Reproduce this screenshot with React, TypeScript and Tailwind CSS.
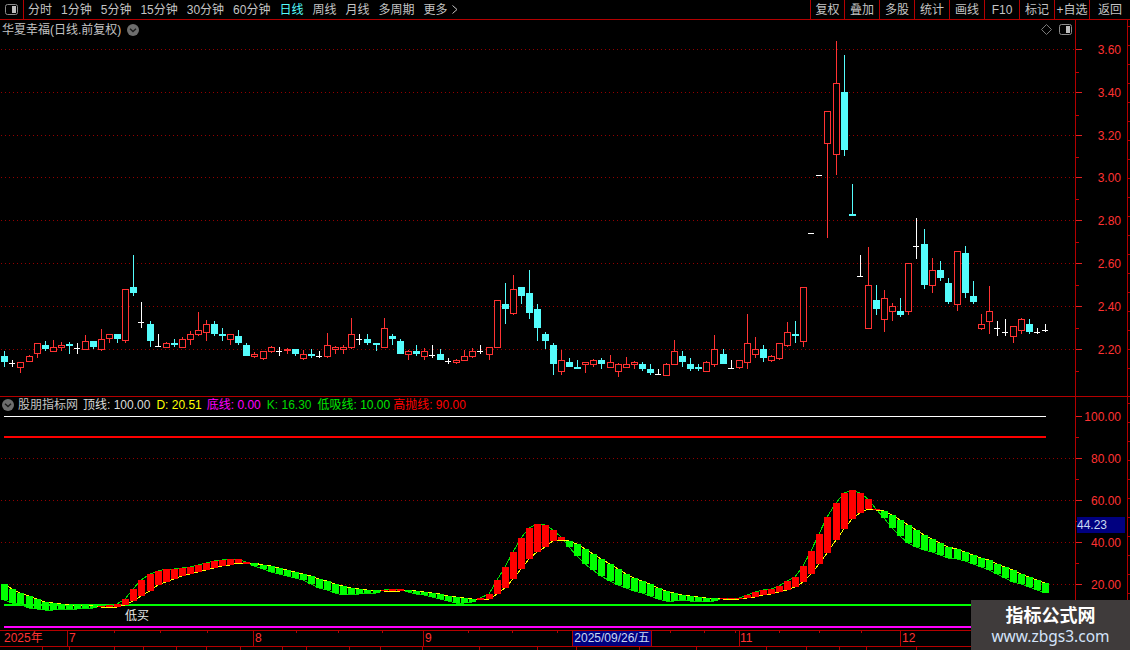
import type { ReactNode } from "react";

const RED = "#ff3232";
const CYAN = "#54fcfc";
const WHITE = "#ffffff";
const DOT = "#940000";

const STEP = 8.07;
const X0 = 4.3;
const xOf = (i: number) => Math.round(X0 + STEP * i);

// kind, bodyTop, bodyBottom, wickTop, wickBottom
type C = ["r" | "c" | "w", number, number, number, number];
const candles: C[] = [
  ["c",356,362,351,367],["w",363,363,360,367],["r",362,368,362,373],["r",356,362,355,362],["r",343,354,343,358],
  ["c",345,349,341,351],["r",347,352,340,352],["r",345,348,342,351],["c",344,346,342,354],["w",348,348,343,354],
  ["r",341,350,335,350],["c",341,347,341,349],["r",339,350,329,351],["r",334,339,334,343],["c",334,339,334,343],
  ["r",289,341,289,343],["c",287,293,255,296],["w",322,322,302,328],["c",324,341,321,347],["w",346,346,334,347],
  ["r",343,348,342,348],["c",343,345,339,347],["r",339,348,337,348],["r",334,340,331,345],["r",330,335,312,336],
  ["r",324,333,320,341],["c",324,334,321,336],["c",334,336,328,341],["r",334,340,334,345],["c",336,343,330,345],
  ["c",345,356,343,356],["r",354,357,352,358],["r",351,359,351,360],["r",347,352,346,353],["w",351,351,347,356],
  ["r",349,351,348,354],["c",349,354,349,356],["r",354,359,350,360],["c",354,356,349,358],["w",356,356,351,358],
  ["r",345,357,333,358],["r",347,350,346,354],["r",347,350,345,354],["r",334,348,318,349],["w",339,339,334,345],
  ["c",339,343,334,345],["c",343,345,343,351],["r",328,348,318,348],["c",336,339,334,345],["c",341,354,339,354],
  ["r",351,355,350,360],["c",351,354,345,356],["r",351,357,348,360],["w",355,355,345,358],["c",354,360,349,360],
  ["w",361,361,358,364],["r",360,363,359,364],["r",356,361,350,361],["r",351,357,348,358],["w",351,351,345,354],
  ["r",347,355,347,360],["r",300,348,300,348],["c",304,309,283,324],["r",289,314,275,315],["c",287,296,287,304],
  ["c",293,313,270,319],["c",309,328,304,341],["c",334,341,332,349],["c",345,364,343,375],["r",360,372,350,375],
  ["c",362,367,358,367],["c",367,369,360,369],["r",362,365,362,373],["r",360,365,359,367],["c",360,364,358,369],
  ["r",362,368,355,368],["r",364,372,363,377],["r",364,368,357,368],["r",362,365,361,369],["c",364,369,362,371],
  ["c",369,373,364,375],["w",374,374,369,375],["r",364,376,363,376],["r",351,365,340,365],["c",356,362,351,367],
  ["c",364,369,358,371],["c",367,369,364,371],["r",362,372,361,372],["r",349,365,335,367],["c",354,364,349,364],
  ["w",368,368,360,369],["r",360,368,360,369],["r",343,363,314,369],["r",349,355,337,358],["c",349,358,345,362],
  ["r",356,361,355,362],["r",343,359,343,360],["r",332,346,322,347],["c",334,336,321,343],["r",287,342,287,347],
  ["w",233,233,233,233],["w",175,175,175,175],["r",111,144,111,238],["r",83,155,41,175],["c",92,150,55,156],
  ["c",214,216,184,216],["w",276,276,255,277],["r",285,329,247,329],["c",300,309,285,315],["r",298,320,290,332],
  ["r",306,312,303,321],["c",311,315,298,317],["r",263,312,263,315],["w",246,246,218,259],["c",244,285,229,289],
  ["r",270,286,258,293],["c",270,278,261,281],["c",283,302,278,304],["r",251,305,251,311],["c",253,293,246,298],
  ["c",296,302,281,304],["r",324,329,314,330],["r",311,322,286,334],["w",328,328,321,336],["w",332,332,319,336],
  ["r",326,337,326,343],["r",319,331,318,334],["c",324,332,319,334],["w",332,332,328,334],["w",330,330,324,332],
];

// lower-pane bars: top, bottom, colour
const bars: ["g" | "r", number, number][] = [
  ["g",584,600],["g",589,603],["g",593,604],["g",596,608],["g",599,609],["g",602,610],["g",603,610],["g",604,609],["g",605,609],["g",605,609],
  ["g",605,608],["g",606,608],["r",606,607],["r",605,607],["r",604,607],["r",599,605],["r",589,601],["r",580,596],["r",574,591],["r",571,585],
  ["r",569,582],["r",569,579],["r",568,576],["r",567,574],["r",565,572],["r",563,570],["r",561,568],["r",560,566],["r",559,565],["r",559,563],
  ["r",562,564],["g",563,566],["g",565,569],["g",566,572],["g",568,574],["g",570,576],["g",572,578],["g",574,580],["g",576,584],["g",579,588],
  ["g",581,590],["g",584,593],["g",586,595],["g",588,594],["g",589,594],["g",590,593],["g",590,593],["r",590,591],["r",589,591],["r",589,591],
  ["g",590,592],["g",591,594],["g",592,595],["g",593,597],["g",594,599],["g",596,601],["g",597,603],["g",598,603],["g",599,602],["r",598,600],
  ["r",594,599],["r",580,594],["r",567,588],["r",552,579],["r",538,569],["r",528,559],["r",524,552],["r",525,547],["r",530,541],["r",537,540],
  ["g",541,547],["g",544,556],["g",549,564],["g",554,570],["g",559,576],["g",564,581],["g",569,585],["g",574,588],["g",578,591],["g",581,593],
  ["g",584,596],["g",588,599],["g",591,601],["g",593,601],["g",595,600],["g",596,601],["g",597,601],["g",598,602],["g",598,601],["r",598,599],
  ["r",598,599],["r",598,599],["r",595,598],["r",592,597],["r",590,595],["r",589,594],["r",586,592],["r",581,590],["r",577,587],["r",566,582],
  ["r",551,574],["r",534,564],["r",517,553],["r",503,540],["r",493,529],["r",490,519],["r",493,513],["r",499,509],["r",509,510],["g",511,518],
  ["g",515,528],["g",520,536],["g",525,543],["g",530,547],["g",535,550],["g",539,552],["g",543,555],["g",547,558],["g",549,559],["g",552,561],
  ["g",555,564],["g",558,567],["g",560,570],["g",564,574],["g",567,578],["g",570,582],["g",574,584],["g",577,587],["g",580,590],["g",583,593],
];

const priceTicks = [49, 92, 135, 177, 220, 263, 306, 349];
const priceLabels = ["3.60", "3.40", "3.20", "3.00", "2.80", "2.60", "2.40", "2.20"];
const axisTicks = [114, 160, 207, 296, 338, 382, 468, 512, 557, 670, 704, 735, 779, 819, 861];
const stripCells = [43, 27, 45, 29, 33, 30, 34, 42, 24, 43, 31, 42, 57, 58, 39, 63, 57, 70, 40, 33, 27, 50];

function Toggle() {
  return (
    <svg width="13" height="11" viewBox="0 0 13 11" className="shrink-0">
      <rect x="0.5" y="0.5" width="12" height="10" rx="2" fill="#000" stroke="#8c8c8c" />
      <rect x="7" y="2" width="4" height="7" fill="#bdbdbd" />
    </svg>
  );
}

function Chevron() {
  return (
    <svg width="12" height="12" viewBox="0 0 12 12" className="shrink-0">
      <circle cx="6" cy="6" r="6" fill="#6e6e6e" />
      <path d="M3 4.8 L6 7.6 L9 4.8" fill="none" stroke="#1c1c1c" strokeWidth="1.4" />
    </svg>
  );
}

function Tab({ children, active }: { children: ReactNode; active?: boolean }) {
  return <span className={active ? "text-[#54fcfc]" : "text-[#c4c4c4]"}>{children}</span>;
}

function ToolBtn({ label, w }: { label: string; w: string }) {
  return (
    <div className={`${w} flex items-center justify-center border-l border-[#b40000] text-[#c4c4c4]`}>{label}</div>
  );
}

function UpperChart() {
  return (
    <svg width="1075" height="376" viewBox="0 20 1075 376" className="block" shapeRendering="crispEdges">
      {priceTicks.map((y) => (
        <line key={y} x1="1" x2="1075" y1={y + 0.5} y2={y + 0.5} stroke={DOT} strokeDasharray="1 3" />
      ))}
      {candles.map(([k, t, b, wt, wb], i) => {
        const x = xOf(i);
        const col = k === "r" ? RED : k === "c" ? CYAN : WHITE;
        if (k === "w") {
          return (
            <g key={i} fill={WHITE}>
              {wb > wt && <rect x={x} y={wt} width="1" height={wb - wt} />}
              <rect x={x - 3} y={t} width="6" height="1" />
            </g>
          );
        }
        return (
          <g key={i}>
            <rect x={x} y={wt} width="1" height={wb - wt} fill={col} />
            {k === "c" ? (
              <rect x={x - 3} y={t} width="7" height={Math.max(b - t, 2)} fill={col} />
            ) : (
              <rect x={x - 2.5} y={t + 0.5} width="6" height={Math.max(b - t - 1, 1)} fill="#000" stroke={col} />
            )}
          </g>
        );
      })}
    </svg>
  );
}

function LowerChart() {
  const kPts = bars.map(([c, t, b], i) => `${xOf(i)},${c === "r" ? t : b}`).join(" ");
  const dPts = bars.map(([c, t, b], i) => `${xOf(i)},${c === "r" ? b : t}`).join(" ");
  return (
    <svg width="1075" height="233" viewBox="0 397 1075 233" className="block" shapeRendering="crispEdges">
      {[458, 500, 542, 584].map((y) => (
        <line key={y} x1="1" x2="1075" y1={y + 0.5} y2={y + 0.5} stroke={DOT} strokeDasharray="1 3" />
      ))}
      <rect x="4" y="416" width="1042" height="1" fill="#ffffff" />
      <rect x="4" y="436" width="1042" height="2" fill="#ff0000" />
      <rect x="4" y="604" width="1042" height="2" fill="#00ff00" />
      <rect x="4" y="626" width="1042" height="2" fill="#ff00ff" />
      <polyline points={kPts} fill="none" stroke="#00e000" strokeWidth="1" />
      <polyline points={dPts} fill="none" stroke="#ffff00" strokeWidth="1" />
      {bars.map(([c, t, b], i) => (
        <rect key={i} x={xOf(i) - 3} y={t} width="7" height={b - t} fill={c === "r" ? "#ff0000" : "#00ff00"} />
      ))}
    </svg>
  );
}

function Axis({ items, minors }: { items: { y: number; label: string }[]; minors: number[] }) {
  const edge = Array.from({ length: 19 }, (_, i) => 6 + i * 19);
  return (
    <>
      {minors.map((y) => (
        <div key={y} className="absolute left-0 h-px w-[3px] bg-[#c80000]" style={{ top: y }} />
      ))}
      {items.map((it) => (
        <div key={it.label} className="absolute left-0 right-[9px] flex justify-between" style={{ top: it.y - 7 }}>
          <div className="mt-[7px] h-px w-[6px] bg-[#e02020]" />
          <div className="h-[16px] leading-[16px] text-[#ff3232]">{it.label}</div>
        </div>
      ))}
      <div className="absolute right-[2px] top-0 h-full w-px bg-[#b40000]" />
      {edge.map((y) => (
        <div key={y} className="absolute right-0 h-px w-[2px] bg-[#b40000]" style={{ top: y }} />
      ))}
    </>
  );
}

export default function App() {
  return (
    <div
      className="relative flex h-[650px] w-[1130px] flex-col overflow-hidden bg-black text-[12px] leading-[20px]"
      style={{ fontFamily: '"Liberation Sans", "Noto Sans CJK SC", sans-serif' }}
    >
      {/* toolbar */}
      <div className="flex h-[20px] shrink-0 border-b border-[#b40000]">
        <div className="flex w-[24px] items-center justify-center border-r border-[#b40000]">
          <Toggle />
        </div>
        <div className="ml-[4px] flex gap-[9px]">
          <Tab>分时</Tab>
          <Tab>1分钟</Tab>
          <Tab>5分钟</Tab>
          <Tab>15分钟</Tab>
          <Tab>30分钟</Tab>
          <Tab>60分钟</Tab>
          <Tab active>日线</Tab>
          <Tab>周线</Tab>
          <Tab>月线</Tab>
          <Tab>多周期</Tab>
          <span className="flex items-center gap-[4px] text-[#c4c4c4]">
            更多
            <svg width="6" height="9" viewBox="0 0 6 9" className="shrink-0">
              <path d="M0.5 0.5 L5 4.5 L0.5 8.5" fill="none" stroke="#c4c4c4" />
            </svg>
          </span>
        </div>
        <div className="ml-auto flex">
          <ToolBtn label="复权" w="w-[34px]" />
          <ToolBtn label="叠加" w="w-[35px]" />
          <ToolBtn label="多股" w="w-[35px]" />
          <ToolBtn label="统计" w="w-[35px]" />
          <ToolBtn label="画线" w="w-[35px]" />
          <ToolBtn label="F10" w="w-[35px]" />
          <ToolBtn label="标记" w="w-[35px]" />
          <ToolBtn label="+自选" w="w-[35px]" />
          <ToolBtn label="返回" w="w-[41px]" />
        </div>
      </div>

      {/* price pane */}
      <div className="flex h-[377px] shrink-0 border-b border-[#b40000]">
        <div className="relative w-[1075px] shrink-0">
          <UpperChart />
          <div className="absolute left-[2px] top-0 flex items-center gap-[6px] text-[#c4c4c4]">
            <span>华夏幸福(日线.前复权)</span>
            <Chevron />
          </div>
          <div className="absolute right-[3px] top-[4px] flex items-center gap-[7px]">
            <svg width="11" height="11" viewBox="0 0 11 11">
              <path d="M5.5 0.5 L10.5 5.5 L5.5 10.5 L0.5 5.5 Z" fill="none" stroke="#7a7a7a" />
            </svg>
            <Toggle />
          </div>
        </div>
        <div className="relative grow border-l border-[#b40000]">
          <Axis
            items={priceTicks.map((y, i) => ({ y: y - 20, label: priceLabels[i] }))}
            minors={[52, 95, 137, 179, 222, 265, 308, 351]}
          />
        </div>
      </div>

      {/* indicator pane */}
      <div className="flex h-[233px] shrink-0">
        <div className="relative w-[1075px] shrink-0">
          <LowerChart />
          <div className="absolute left-[2px] top-[-2px] flex items-center">
            <Chevron />
            <span className="ml-[4px] text-[#c4c4c4]">股朋指标网</span>
            <span className="ml-[5px] text-[#dcdcdc]">顶线: 100.00</span>
            <span className="ml-[6px] text-[#ffff00]">D: 20.51</span>
            <span className="ml-[5px] text-[#ff00ff]">底线: 0.00</span>
            <span className="ml-[6px] text-[#00d800]">K: 16.30</span>
            <span className="ml-[6px] text-[#00e800]">低吸线: 10.00</span>
            <span className="ml-[3px] text-[#ff0000]">高抛线: 90.00</span>
          </div>
          <span className="absolute left-[125px] top-[209px] text-[#e8e8e8]">低买</span>
        </div>
        <div className="relative grow border-l border-[#b40000]">
          <Axis
            items={[
              { y: 19, label: "100.00" },
              { y: 61, label: "80.00" },
              { y: 103, label: "60.00" },
              { y: 145, label: "40.00" },
              { y: 187, label: "20.00" },
            ]}
            minors={[40, 82, 124, 166, 208]}
          />
          <div className="absolute left-[1px] top-[120px] h-[16px] w-[48px] bg-[#000080] leading-[16px] text-[#c8d8f0]">
            44.23
          </div>
        </div>
      </div>

      {/* time axis */}
      <div className="relative flex h-[17px] shrink-0 items-center border-y border-[#b40000] leading-[15px] text-[#ff3232]">
        <span className="w-[67px] pl-[4px]">2025年</span>
        <span className="h-full w-[186px] border-l border-[#b40000] pl-[1px]">7</span>
        <span className="h-full w-[170px] border-l border-[#b40000] pl-[1px]">8</span>
        <span className="h-full w-[150px] border-l border-[#b40000] pl-[1px]">9</span>
        <span className="h-full w-[78px] bg-[#000080] text-center text-[#c8d8f0] outline outline-[#b40000]">
          2025/09/26/五
        </span>
        <span className="ml-[88px] h-full w-[161px] border-l border-[#b40000]">11</span>
        <span className="h-full border-l border-[#b40000] pl-[1px]">12</span>
        {axisTicks.map((x) => (
          <div key={x} className="absolute top-0 h-[2px] w-px bg-[#b40000]" style={{ left: x }} />
        ))}
      </div>

      {/* clipped status strip */}
      <div className="flex h-[3px] shrink-0 overflow-hidden">
        {stripCells.map((w, i) => (
          <div key={i} className="h-full shrink-0 border-r border-[#b40000]" style={{ width: w }} />
        ))}
      </div>

      {/* watermark */}
      <div className="absolute bottom-0 right-0 flex h-[50px] w-[159px] flex-col items-center bg-[#3f3b3b] pt-[5px]">
        <span className="text-[18px] font-bold leading-[22px] text-white">指标公式网</span>
        <span
          className="text-[15.5px] leading-[18px] text-[#d4e4fa]"
          style={{ fontFamily: '"Noto Sans", sans-serif' }}
        >
          www.zbgs3.com
        </span>
      </div>
    </div>
  );
}
